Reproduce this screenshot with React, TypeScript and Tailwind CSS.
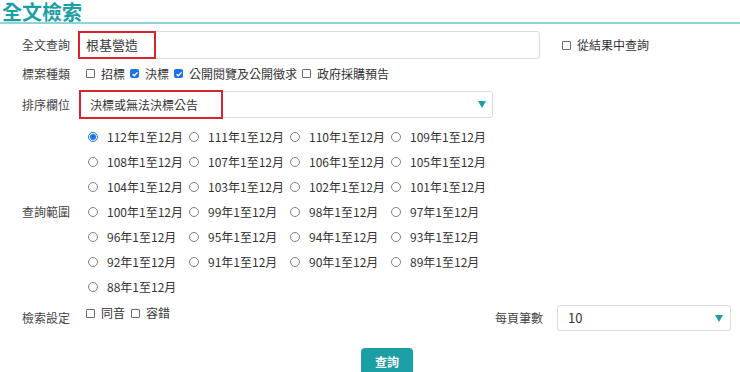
import React from "react";

const TEAL = "#1b9ea4";

const YEARS: number[] = Array.from({ length: 25 }, (_, i) => 112 - i);

function Box({ checked = false }: { checked?: boolean }) {
  if (checked) {
    return (
      <span className="flex h-[9px] w-[9px] shrink-0 items-center justify-center rounded-[2px] bg-[#1a73e8]">
        <svg viewBox="0 0 10 10" className="h-[8px] w-[8px]">
          <path d="M2 5.2l2.1 2.1L8.2 3" stroke="white" strokeWidth="1.7" fill="none" />
        </svg>
      </span>
    );
  }
  return <span className="h-[9px] w-[9px] shrink-0 rounded-[1px] border border-[#6b6b6b] bg-white" />;
}

function Radio({ checked = false }: { checked?: boolean }) {
  return checked ? (
    <span className="flex h-[10px] w-[10px] shrink-0 items-center justify-center rounded-full border border-[#1a73e8] bg-white">
      <span className="h-[6px] w-[6px] rounded-full bg-[#1a73e8]" />
    </span>
  ) : (
    <span className="h-[10px] w-[10px] shrink-0 rounded-full border border-[#808080] bg-white" />
  );
}

function Check({ label, checked }: { label: string; checked?: boolean }) {
  return (
    <label className="flex items-center gap-[6px]">
      <Box checked={checked} />
      <span>{label}</span>
    </label>
  );
}

function Caret() {
  return (
    <svg viewBox="0 0 8 7" className="h-[7px] w-[8px]">
      <polygon points="0,0 8,0 4,7" fill={TEAL} />
    </svg>
  );
}

function Label({ children }: { children: React.ReactNode }) {
  return <div className="w-[78px] shrink-0 pl-[22px] text-[#444]">{children}</div>;
}

export default function App() {
  return (
    <div className="h-[372px] w-[740px] overflow-hidden bg-white font-['Noto_Sans_CJK_TC','Noto_Sans',sans-serif] text-[12px] text-[#333]">
      <div className="h-[24px] border-b-2 border-[#8fd4d6] pt-[1px]">
        <h1 className="pl-[2px] text-[20px] font-bold leading-[21px] text-[#1b9ea4]">全文檢索</h1>
      </div>

      {/* 全文查詢 */}
      <div className="mt-[7px] flex h-[28px] items-center">
        <Label>全文查詢</Label>
        <div className="relative flex h-[28px] w-[462px] items-center rounded-[3px] border border-[#dcdcdc] pl-[7px] text-[13px]">
          根基營造
          <span className="absolute left-[-1px] top-[-1px] h-[28px] w-[78px] border-2 border-[#d9232d]" />
        </div>
        <div className="ml-[22px]">
          <Check label="從結果中查詢" />
        </div>
      </div>

      {/* 標案種類 */}
      <div className="flex h-[29px] items-center">
        <Label>標案種類</Label>
        <div className="ml-[8px] flex items-center gap-[5px]">
          <Check label="招標" />
          <Check label="決標" checked />
          <Check label="公開閱覽及公開徵求" checked />
          <Check label="政府採購預告" />
        </div>
      </div>

      {/* 排序欄位 */}
      <div className="mt-[3px] flex h-[27px] items-center">
        <Label>排序欄位</Label>
        <div className="relative ml-[1px] flex h-[27px] w-[414px] items-center justify-between rounded-[3px] border border-[#dcdcdc] pl-[10px] pr-[6px]">
          <span>決標或無法決標公告</span>
          <Caret />
          <span className="absolute left-[-1px] top-[-2px] h-[29px] w-[144px] border-2 border-[#d9232d]" />
        </div>
      </div>

      {/* 查詢範圍 */}
      <div className="mt-[6px] flex items-center">
        <Label>查詢範圍</Label>
        <div className="ml-[8px] grid grid-cols-[repeat(4,101px)] auto-rows-[25px]">
          {YEARS.map((y) => (
            <label key={y} className="flex items-center gap-[9px] pl-[2px]">
              <Radio checked={y === 112} />
              <span>{y}年1至12月</span>
            </label>
          ))}
        </div>
      </div>

      {/* 檢索設定 */}
      <div className="mt-[6px] flex h-[26px] items-center">
        <Label>檢索設定</Label>
        <div className="ml-[8px] flex h-[16px] items-center gap-[6px] self-start">
          <Check label="同音" />
          <Check label="容錯" />
        </div>
        <div className="ml-auto text-[#444]">每頁筆數</div>
        <div className="ml-[14px] mr-[9px] flex h-[26px] w-[174px] items-center justify-between rounded-[3px] border border-[#dcdcdc] pl-[10px] pr-[7px] text-[13px]">
          <span>10</span>
          <Caret />
        </div>
      </div>

      <button
        type="button"
        className="ml-[361px] mt-[17px] h-[28px] w-[52px] rounded-[4px] bg-[#1b9ea4] text-[12px] font-bold text-white"
      >
        查詢
      </button>
    </div>
  );
}
